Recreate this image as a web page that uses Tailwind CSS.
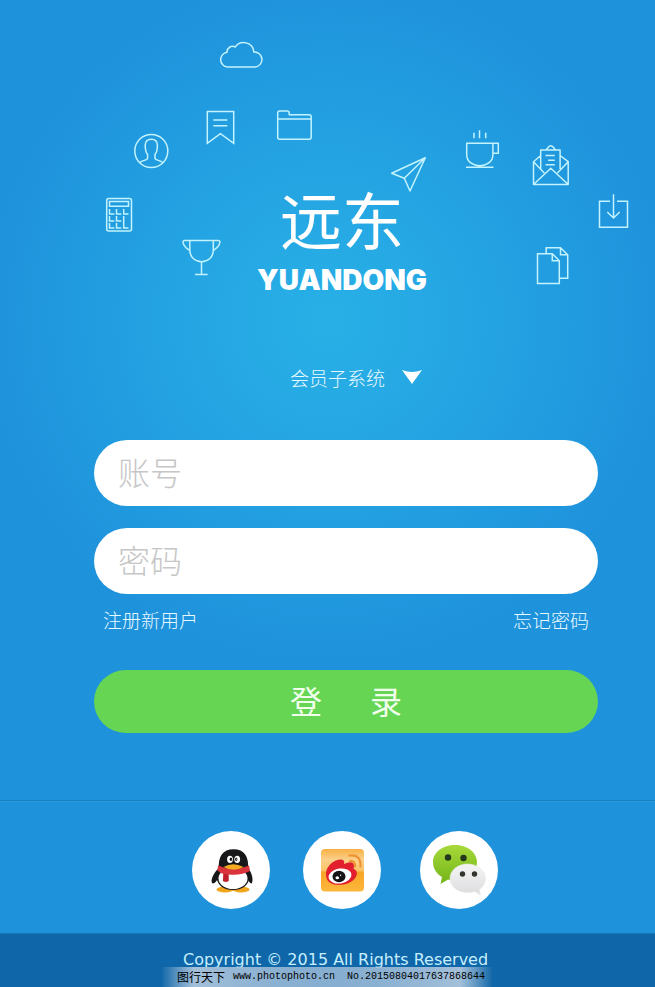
<!DOCTYPE html>
<html lang="zh-CN">
<head>
<meta charset="utf-8">
<meta name="viewport" content="width=device-width, initial-scale=1">
<title>远东 会员登录</title>
<script src="https://cdn.jsdelivr.net/npm/@tailwindcss/browser@4"></script>
</head>
<body class="relative flex min-h-screen flex-col overflow-x-hidden bg-[#1f92dc] bg-[radial-gradient(circle_at_50%_320px,#28b0e6_0px,#25a6e3_130px,#219bdf_250px,#1f92dc_345px)] font-['Liberation_Sans','Noto_Sans_CJK_SC',sans-serif] text-white">

  <!-- Floating line icons around the brand -->
  <svg class="pointer-events-none absolute top-0 left-0 w-full" viewBox="0 0 655 300" fill="none" stroke="#c3f3ff" stroke-width="1.5" stroke-linejoin="round" aria-hidden="true">
    <path d="M227.500 67H255a7.400 7.400 0 0 0-1.200-15A10.200 10.200 0 0 0 235.200 47A5.600 5.600 0 0 0 227 52.300A7.400 7.400 0 0 0 227.500 67Z"/>
    <path stroke-linejoin="miter" d="M207.300 111.500h26.400v31.800l-13.300-9.600-13.100 9.600ZM213.300 120h14M213.300 125.700h14"/>
    <path d="M277.700 137.300v-24.300a2 2 0 0 1 2-2h7.500a2 2 0 0 1 2 2v1.700h20a2 2 0 0 1 2 2v20.600a2 2 0 0 1-2 2h-29.500a2 2 0 0 1-2-2ZM277.700 119h33.500"/>
    <circle cx="151.300" cy="151" r="16.500"/>
    <path d="M139.800 162.500C143 160.200 147.300 160.200 147.600 158.300V154.500C145.500 152 145.200 148.500 145.200 145.500C145.200 141 148 139.200 151.300 139.200S157.400 141 157.400 145.500C157.400 148.500 157.100 152 155 154.500V158.300C155.300 160.200 159.600 160.200 162.800 162.500"/>
    <rect x="106.700" y="198.400" width="24.800" height="32.600" rx="2"/>
    <path stroke-linejoin="miter" d="M109.500 201.500h19v4.800h-19ZM109.500 209v5h4.800M116.500 209v5h4.800M123.700 209v5h4.800M109.500 216v5h4.800M116.500 216v5h4.800M109.500 223v5h4.800M116.500 223v5h4.800M123.700 216v12h4.800"/>
    <path d="M184.300 240.500h34.300a1.500 1.500 0 0 1 1.100 2.300C219 247 216 248.500 213.300 250.500M184.300 240.500a1.500 1.500 0 0 0-1.100 2.300C184 247 187 248.500 189.800 250.500M189.800 240.500v9.500c0 15.500 23.500 15.500 23.500 0v-9.500M201.500 261.700v12.800M195 274.500h12.600"/>
    <path d="M425.300 157.700L391.700 173.300l12.600 5L410 191ZL404.300 178.300"/>
    <path stroke-linejoin="miter" d="M466.700 143.300h26.200v11.500c0 14.500-26.200 14.500-26.200 0ZM492.900 143.300h5.400v9.900h-5.400M466 167.300h27.500M474 132.700v5.500M479.500 130.300v7.900M485.700 132.700v5.500"/>
    <path d="M533.500 161.700v22.800h34.700v-22.800M533.500 184.500l17.300-16.200 17.400 16.200M540.700 155.500l-7.200 6.200 10.800 11.200M560 155.500l8.200 6.200-10.800 11.200M540.700 169v-19h19.400v19M546 150l3-3.500q1.800-1.500 3.600 0l3 3.500M545.500 155.500h9.300M548 160.200h6.800M545.500 164.800h9.300"/>
    <path stroke-linejoin="miter" d="M610 201.300h-10.500v26h28v-26H617M613.500 194.300v23.600M607.300 212l6.200 6 6.200-6"/>
    <path stroke-linejoin="miter" d="M537.500 253.700h14.800l7 7v22.800h-21.800ZM552.300 253.700v7h7M546.200 253.700v-6h14.300l7.200 7v23.500h-8.400M560.500 247.700v7h7.200"/>
  </svg>

  <main class="flex flex-col pr-[57px] pl-[94px]">
    <header class="flex flex-col items-center pt-[184px] pr-2">
      <h1 class="text-center">
        <span class="block font-['Noto_Sans_CJK_SC',sans-serif] text-[62px] leading-[68px] font-normal">远东</span>
        <span class="block pt-1 font-['Inter',sans-serif] text-[28px] leading-[48px] font-black">YUANDONG</span>
      </h1>
    </header>

    <form class="flex flex-col pt-14">
      <div class="relative self-center pl-4">
        <label class="sr-only" for="system">系统</label>
        <select id="system" class="block h-9 w-[136px] appearance-none bg-transparent pl-1 font-['Noto_Sans_CJK_SC',sans-serif] text-[19px] leading-9 font-light text-[#e6f9ff]">
          <option>会员子系统</option>
        </select>
        <svg class="pointer-events-none absolute top-[9px] right-0 h-4 w-5" viewBox="0 0 20 16" fill="#fff" aria-hidden="true"><path d="M0 1Q10 5 20 1L10 15Z"/></svg>
      </div>

      <label class="sr-only" for="account">账号</label>
      <input id="account" type="text" placeholder="账号" class="mt-[44px] h-[66px] w-full rounded-full bg-white px-6 pb-1 font-['Noto_Sans_CJK_SC',sans-serif] text-[32px] font-light text-gray-600 placeholder:text-[#c6c6c6]">
      <label class="sr-only" for="password">密码</label>
      <input id="password" type="password" placeholder="密码" class="mt-[22px] h-[66px] w-full rounded-full bg-white px-6 pb-1 font-['Noto_Sans_CJK_SC',sans-serif] text-[32px] font-light text-gray-600 placeholder:text-[#c6c6c6]">

      <nav class="flex justify-between px-[9px] pt-3 font-['Noto_Sans_CJK_SC',sans-serif] text-[19px] leading-7 font-light text-[#e6f9ff]">
        <a href="#register">注册新用户</a>
        <a href="#forgot">忘记密码</a>
      </nav>

      <button type="submit" class="mt-9 flex h-[63px] items-center justify-center gap-12 rounded-full bg-[#66d554] pb-1 font-['Noto_Sans_CJK_SC',sans-serif] text-[32px] font-normal text-[#f0ffec]"><span>登</span><span>录</span></button>
    </form>
  </main>

  <section class="mt-[67px] border-t border-[#187fc4]">
    <div class="flex border-t border-[#2b9de2] pt-[29px] pb-6 pl-[192px]">
      <a href="#qq" aria-label="QQ" class="block size-[78px] rounded-full bg-white">
        <svg viewBox="0 0 78 78">
          <ellipse cx="33" cy="58.500" rx="8.500" ry="3" fill="#f0a51c"/><ellipse cx="49" cy="58.500" rx="8.500" ry="3" fill="#f0a51c"/>
          <path d="M28 36C22 41 18.500 48 20 52C21.500 53.500 24.500 51 26 47L55 47C57 51 59 53.500 60 52C61.500 48 60 41 55 36Z" fill="#17171a"/>
          <path d="M27 40C25.500 25 31 18.300 41.500 18.300S57.500 25 56 40L57.500 47C56 55 50 59 41 59S26 55 24.500 47Z" fill="#17171a"/>
          <ellipse cx="41" cy="47.500" rx="14.500" ry="10.500" fill="#fff"/>
          <path d="M26 34.500Q41 41.500 57 34.500L58 40Q50 44.500 36.500 43.500V50Q34 51.500 31 50L31.500 43Q27.500 41.500 25.500 39.500Z" fill="#d9333b"/>
          <path d="M31.500 43L36.500 43.500V50Q34 51.500 31 50Z" fill="#bd2029"/>
          <ellipse cx="38" cy="28.300" rx="2.900" ry="3.600" fill="#fff"/><ellipse cx="45.200" cy="28.300" rx="2.900" ry="3.600" fill="#fff"/>
          <ellipse cx="38.900" cy="28.300" rx="1.200" ry="1.700" fill="#111"/><ellipse cx="44.300" cy="28.300" rx="1.200" ry="1.700" fill="#111"/><circle cx="45" cy="28.300" r=".7" fill="#fff"/>
          <path d="M31.500 36Q41 30.500 51.500 36Q42 41.500 31.500 36Z" fill="#f5ab20"/>
        </svg>
      </a>
      <a href="#weibo" aria-label="微博" class="ml-[33px] block size-[78px] rounded-full bg-white">
        <svg viewBox="0 0 78 78">
          <defs><linearGradient id="wb" x1="0" y1="0" x2="0" y2="1"><stop offset="0" stop-color="#f8b044"/><stop offset=".25" stop-color="#fbd08a"/><stop offset=".5" stop-color="#fbc468"/><stop offset=".55" stop-color="#f9a526"/><stop offset="1" stop-color="#fcb83c"/></linearGradient></defs>
          <rect x="18" y="18" width="43" height="42.500" rx="4" fill="url(#wb)"/>
          <path d="M23 44C22 36 31 28 38.500 28.500Q42 29 41 33Q48 30 50.500 32.500Q51.800 35 50.500 37.500Q54.500 39.500 53.800 43.500C52 50.500 44 53.800 36 53.800S23.500 51 23 44Z" fill="#e21f2d"/>
          <ellipse cx="37" cy="45" rx="11.500" ry="7.500" fill="#fff" transform="rotate(-8 37 45)"/>
          <ellipse cx="36" cy="45.500" rx="6.500" ry="5.700" fill="#161416"/><ellipse cx="34.300" cy="46.800" rx="1.800" ry="1.500" fill="#fff"/><circle cx="37.600" cy="44.200" r=".7" fill="#fff"/>
          <path d="M46.500 24.500Q58 23 57.500 35.500M47 30Q52.500 29.500 52 35.500" fill="none" stroke="#ed9236" stroke-width="2.200" stroke-linecap="round"/>
        </svg>
      </a>
      <a href="#wechat" aria-label="微信" class="ml-[39px] block size-[78px] rounded-full bg-white">
        <svg viewBox="0 0 78 78">
          <defs><linearGradient id="wg" x1="0" y1="0" x2="0" y2="1"><stop offset="0" stop-color="#a8d93a"/><stop offset="1" stop-color="#72b418"/></linearGradient><linearGradient id="ww" x1="0" y1="0" x2="0" y2="1"><stop offset="0" stop-color="#f5f5f5"/><stop offset="1" stop-color="#dcdcdf"/></linearGradient></defs>
          <path d="M35 14C23 14 13 21 13 31C13 38 17 43 22 46L20.500 53L28 48.500C31 49.500 35 49.500 38 49C49 48 57 40 57 31C57 21 47 14 35 14Z" fill="url(#wg)"/>
          <path d="M47.500 33C37.500 33 30 39.500 30 47.500C30 55.500 38 61.500 47.500 61.500Q52 61.500 55 60.500L60.500 64L59 58.500C63 56 65.500 52 65.500 47.500C65.500 39.500 57.500 33 47.500 33Z" fill="url(#ww)" stroke="#e7e9e4" stroke-width=".6"/>
          <circle cx="28" cy="26.500" r="3.200" fill="#24391c"/><circle cx="43.500" cy="27" r="3.200" fill="#24391c"/>
          <circle cx="42.500" cy="43" r="2.700" fill="#30352e"/><circle cx="54.500" cy="43" r="2.700" fill="#30352e"/>
        </svg>
      </a>
    </div>
  </section>

  <footer class="relative flex-1 border-t border-[#1a77bb] bg-[#0f66a8] pt-[14px] pl-[183px]">
    <p class="font-['DejaVu_Sans',sans-serif] text-[16px] leading-6 whitespace-nowrap text-[#c5efff]">Copyright © 2015 All Rights Reserved</p>
    <p class="absolute bottom-0 left-[161px] flex h-5 w-[332px] items-center gap-2 bg-linear-to-r from-[#a4c0da]/0 via-[#a4c0da] via-10% to-[#a4c0da]/0 pl-4 text-black">
      <span class="absolute inset-0 bg-linear-to-r from-[#a4c0da]/0 from-0% via-[#a4c0da] via-90% to-[#a4c0da]/0"></span>
      <span class="relative font-['Noto_Sans_CJK_SC',sans-serif] text-[12px] leading-5">图行天下</span>
      <span class="relative font-['Liberation_Mono',monospace] text-[10px] leading-5 whitespace-pre">www.photophoto.cn  No.20150804017637868644</span>
    </p>
  </footer>
</body>
</html>
